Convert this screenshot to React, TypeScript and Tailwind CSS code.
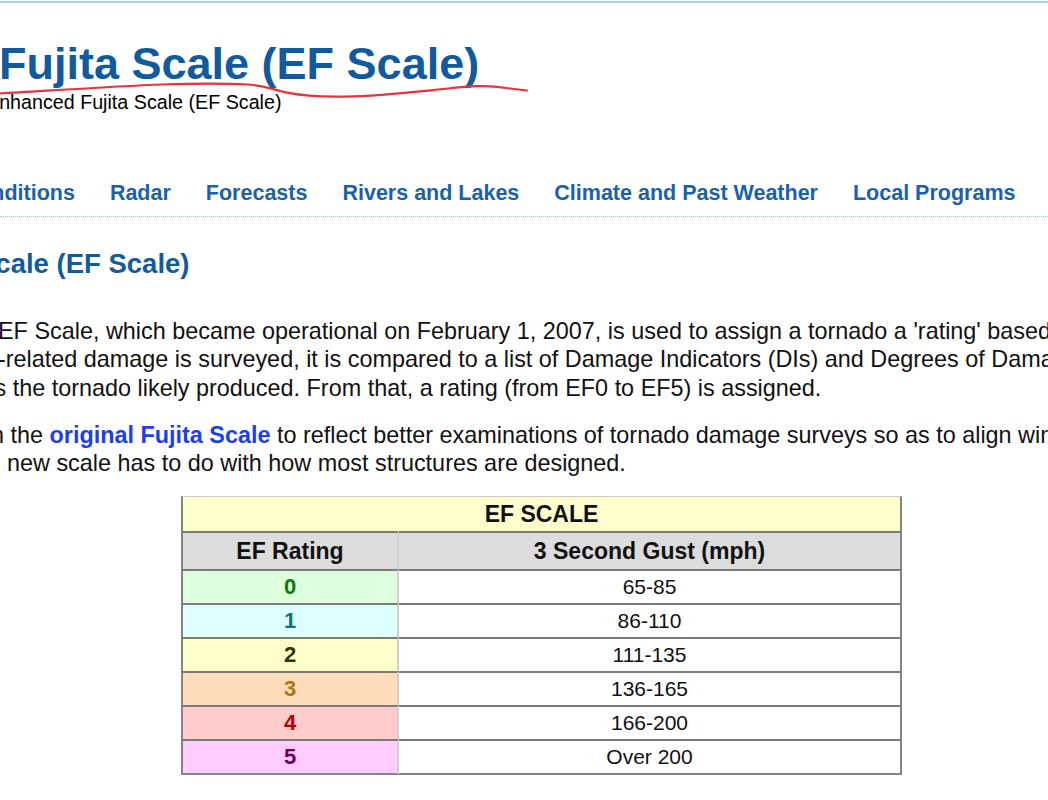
import React from "react";

const rows = [
  { r: "0", gust: "65-85", bg: "bg-[#ddffdd]", fg: "text-[#0b7a0b]" },
  { r: "1", gust: "86-110", bg: "bg-[#ddffff]", fg: "text-[#137272]" },
  { r: "2", gust: "111-135", bg: "bg-[#ffffcc]", fg: "text-[#333300]" },
  { r: "3", gust: "136-165", bg: "bg-[#ffdcb9]", fg: "text-[#a8780f]" },
  { r: "4", gust: "166-200", bg: "bg-[#ffcccc]", fg: "text-[#b00000]" },
  { r: "5", gust: "Over 200", bg: "bg-[#ffccff]", fg: "text-[#680068]" },
];

export default function App() {
  return (
    <div className="relative w-[1048px] h-[800px] overflow-hidden bg-white text-black font-['Liberation_Sans',Arial,sans-serif]">
      <div className="h-[2px] mt-[1px] bg-[#a9d1f4]" />

      <header>
        <h1 className="mt-[38px] -ml-[1px] text-[45px] leading-[45px] font-bold text-[#125a9e] whitespace-nowrap">
          Fujita Scale (EF Scale)
        </h1>
        <div className="mt-[6px] -ml-[14px] text-[19.7px] leading-[20px] whitespace-nowrap">
          Enhanced Fujita Scale (EF Scale)
        </div>
      </header>

      <svg
        className="absolute left-0 top-0 pointer-events-none"
        width="540"
        height="110"
        viewBox="0 0 540 110"
      >
        <path
          d="M0 93.5 C 60 90, 120 86, 162 84.5 S 230 83.5, 248 84.5 S 270 89, 286 92.4 S 320 97, 345 96.6 S 405 93, 431 90.3 S 465 86.5, 476 86.2 S 490 86, 497 86.9 S 518 89.5, 527 90.5"
          fill="none"
          stroke="#e8323c"
          strokeWidth="2.2"
          strokeLinecap="round"
        />
      </svg>

      <nav className="mt-[68px] pb-[9.5px] border-b border-dotted border-[#99c6ee]">
        <ul className="flex gap-[35px] -ml-[121px] whitespace-nowrap text-[21.5px] leading-[26px] font-bold text-[#1b61aa]">
          <li>Current Conditions</li>
          <li>Radar</li>
          <li>Forecasts</li>
          <li>Rivers and Lakes</li>
          <li>Climate and Past Weather</li>
          <li>Local Programs</li>
        </ul>
      </nav>

      <main>
        <h2 className="mt-[31.5px] -ml-[243px] text-[27.5px] leading-[32px] font-bold text-[#125a9e] whitespace-nowrap">
          Enhanced Fujita Scale (EF Scale)
        </h2>

        <div className="mt-[36.5px] text-[23.4px] leading-[28.5px] whitespace-nowrap text-[#111]">
          <div className="-ml-[2px]">
            EF Scale, which became operational on February 1, 2007, is used to assign a tornado a 'rating' based on estimated wind speeds
          </div>
          <div className="-ml-[2px]">
            -related damage is surveyed, it is compared to a list of Damage Indicators (DIs) and Degrees of Damage (DoD)
          </div>
          <div className="-ml-[5.5px]">
            s the tornado likely produced. From that, a rating (from EF0 to EF5) is assigned.
          </div>
        </div>

        <div className="mt-[18.5px] text-[23.4px] leading-[28.5px] whitespace-nowrap text-[#111]">
          <div className="-ml-[9px]">
            n the <span className="font-bold text-[#1d3ee8]">original Fujita Scale</span> to reflect better examinations of tornado damage surveys so as to align wind speeds
          </div>
          <div className="ml-[7px]">
            new scale has to do with how most structures are designed.
          </div>
        </div>

        <table className="mt-[18.5px] ml-[181px] w-[721px] border-separate border-spacing-0 text-[#111]">
          <tbody>
            <tr>
              <td
                colSpan={2}
                className="h-[35px] p-0 text-center align-middle bg-[#ffffcc] border-t border-t-[#cccccc] border-l-2 border-l-[#858585] border-r-2 border-r-[#858585] text-[23px] leading-[26px] font-bold"
              >
                EF SCALE
              </td>
            </tr>
            <tr>
              <th className="w-[218px] h-[38px] p-0 text-center align-middle bg-[#dcdcdc] border-t-2 border-t-[#7b7b7b] border-l-2 border-l-[#858585] border-r-2 border-r-[#d0d0d0] text-[23px] leading-[26px] font-bold">
                EF Rating
              </th>
              <th className="h-[38px] p-0 text-center align-middle bg-[#dcdcdc] border-t-2 border-t-[#7b7b7b] border-r-2 border-r-[#858585] text-[23px] leading-[26px] font-bold">
                3 Second Gust (mph)
              </th>
            </tr>
            {rows.map((row, i) => {
              const last = i === rows.length - 1;
              return (
                <tr key={row.r}>
                  <td
                    className={`w-[218px] h-[34px] p-0 text-center align-middle border-t-2 border-t-[#7b7b7b] border-l-2 border-l-[#858585] border-r-2 border-r-[#d0d0d0] text-[22px] leading-[24px] font-bold ${row.bg} ${row.fg} ${last ? "h-[36px] border-b-2 border-b-[#858585]" : ""}`}
                  >
                    {row.r}
                  </td>
                  <td
                    className={`h-[34px] p-0 text-center align-middle bg-white border-t-2 border-t-[#7b7b7b] border-r-2 border-r-[#858585] text-[21px] leading-[24px] ${last ? "h-[36px] border-b-2 border-b-[#858585]" : ""}`}
                  >
                    {row.gust}
                  </td>
                </tr>
              );
            })}
          </tbody>
        </table>
      </main>
    </div>
  );
}
